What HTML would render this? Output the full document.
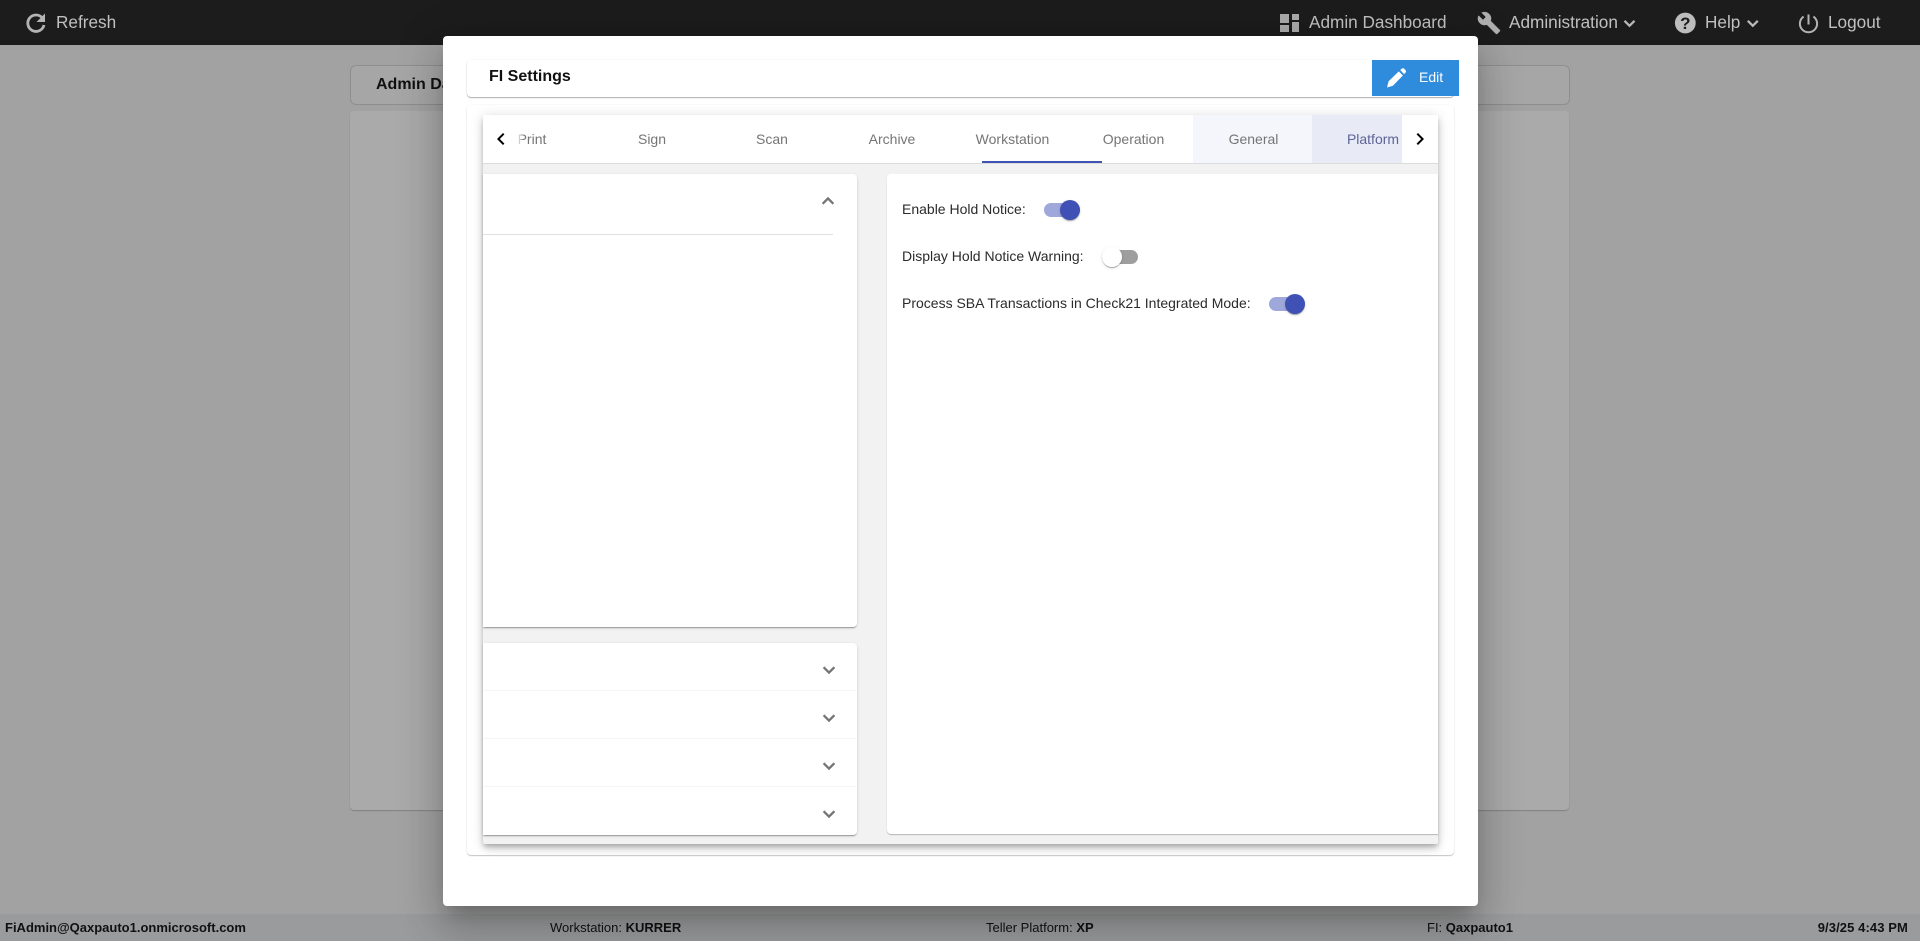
<!DOCTYPE html>
<html><head><meta charset="utf-8"><title>FI Settings</title>
<style>
html,body{margin:0;padding:0;width:1920px;height:941px;overflow:hidden;background:#a2a2a2;font-family:"Liberation Sans",Arial,sans-serif}
.a{position:absolute}
.t{position:absolute;white-space:nowrap;line-height:20px;height:20px}
svg{position:absolute;display:block}
.top{color:#c0c0c0;font-size:17.2px;top:12px}
.foot{font-size:13px;color:#111;top:918px}
.tab{font-size:14px;color:#757575;top:129px;width:120px;text-align:center}
.lab{font-size:14px;color:#2b2b2b}
.track{position:absolute;width:36px;height:14px;border-radius:7px}
.thumb{position:absolute;width:20px;height:20px;border-radius:50%;box-shadow:0 2px 1px -1px rgba(0,0,0,.2),0 1px 1px rgba(0,0,0,.14),0 1px 3px rgba(0,0,0,.12)}
</style></head>
<body>
<div class="a" style="left:0;top:0;width:1920px;height:45px;background:#1c1c1c"></div>
<svg style="left:0;top:0" width="1920" height="45" viewBox="0 0 1920 45">
  <path d="M42.5 18.2A8.2 8.2 0 1 0 44 25" fill="none" stroke="#b4b4b4" stroke-width="2.8"/>
  <path d="M45 13.5V22H36.5z" fill="#b4b4b4"/>
  <g fill="#aaa">
    <rect x="1280" y="14" width="9" height="9"/><rect x="1280" y="25" width="9" height="7"/>
    <rect x="1292" y="14" width="7" height="6"/><rect x="1292" y="22" width="7" height="10"/>
  </g>
  <g transform="translate(1477 11)" fill="#b0b0b0" stroke="#b0b0b0" stroke-width=".5"><path d="M22.7 19l-9.1-9.1c.9-2.3.4-5-1.5-6.9-2-2-5-2.4-7.4-1.3L9 6 6 9 1.6 4.7C.4 7.1.9 10.1 2.9 12.1c1.9 1.9 4.6 2.4 6.9 1.5l9.1 9.1c.4.4 1 .4 1.4 0l2.3-2.3c.5-.4.5-1.1.1-1.4z"/></g>
  <path d="M1624.5 20.8l5 5 5-5" fill="none" stroke="#b8b8b8" stroke-width="2.3"/>
  <circle cx="1685.3" cy="23" r="10.4" fill="#bdbdbd"/>
  <text x="1685.3" y="29" text-anchor="middle" font-family="Liberation Sans, sans-serif" font-size="17" font-weight="bold" fill="#1c1c1c">?</text>
  <path d="M1747.8 20.8l5 5 5-5" fill="none" stroke="#b8b8b8" stroke-width="2.3"/>
  <path d="M1803.6 16.6A8.6 8.6 0 1 0 1813.4 16.6" fill="none" stroke="#b4b4b4" stroke-width="2"/>
  <path d="M1808.5 14.5V24.5" fill="none" stroke="#b4b4b4" stroke-width="2"/>
</svg>
<div class="t top" style="left:56px">Refresh</div>
<div class="t top" style="left:1309px">Admin Dashboard</div>
<div class="t top" style="left:1509px">Administration</div>
<div class="t top" style="left:1705px">Help</div>
<div class="t top" style="left:1828px">Logout</div>

<div class="a" style="left:350px;top:65px;width:1218px;height:38px;border:1px solid #8e8e8e;border-radius:6px;background:#a6a6a6"></div>
<div class="t" style="left:376px;top:75px;font-size:16px;font-weight:bold;color:#111">Admin Dashboard</div>
<div class="a" style="left:350px;top:111px;width:1219px;height:699px;background:#aaa;border-radius:4px;box-shadow:0 1px 1px rgba(0,0,0,.2)"></div>

<div class="a" style="left:0;top:914px;width:1920px;height:27px;background:#9a9b9c"></div>
<div class="t foot" style="left:5px;font-weight:bold">FiAdmin@Qaxpauto1.onmicrosoft.com</div>
<div class="t foot" style="left:550px">Workstation: <b>KURRER</b></div>
<div class="t foot" style="left:986px">Teller Platform: <b>XP</b></div>
<div class="t foot" style="left:1427px">FI: <b>Qaxpauto1</b></div>
<div class="t foot" style="right:12px;font-weight:bold;letter-spacing:.1px">9/3/25 4:43 PM</div>

<div class="a" style="left:443px;top:36px;width:1035px;height:870px;background:#fff;border-radius:4px;box-shadow:0 11px 15px -7px rgba(0,0,0,.2),0 24px 38px 3px rgba(0,0,0,.14),0 9px 46px 8px rgba(0,0,0,.12)"></div>

<div class="a" style="left:467px;top:60px;width:987px;height:37px;background:#fff;border-radius:4px;box-shadow:0 1px 1px rgba(0,0,0,.3),0 0 2px rgba(0,0,0,.06)"></div>
<div class="t" style="left:489px;top:67px;font-size:16px;font-weight:bold;color:#111">FI Settings</div>
<div class="a" style="left:1372px;top:60px;width:87px;height:36px;background:#2f8cdc"></div>
<svg style="left:1380px;top:62px" width="32" height="32" viewBox="1380 62 32 32" fill="#fff">
  <path d="M1387 87.5l1.6-6.2 10.2-9.9 4.1 4.1-10 10.2z"/>
  <path d="M1400.2 70l1.5-1.3c.8-.7 1.8-.6 2.5.1l1.3 1.3c.7.8.7 1.8 0 2.5l-1.4 1.5z"/>
</svg>
<div class="t" style="left:1419px;top:67px;font-size:14px;color:#fff">Edit</div>

<div class="a" style="left:467px;top:105px;width:987px;height:750px;background:#fff;border-radius:4px;box-shadow:0 1px 1px rgba(0,0,0,.22),0 0 2px rgba(0,0,0,.06)"></div>

<div class="a" style="left:483px;top:115px;width:955px;height:729px;background:#f2f2f2;border-radius:0 0 2px 2px;box-shadow:0 3px 5px -1px rgba(0,0,0,.2),0 5px 8px rgba(0,0,0,.14),0 1px 14px rgba(0,0,0,.12)"></div>
<div class="a" style="left:483px;top:115px;width:955px;height:48px;background:#fff;border-bottom:1px solid #dcdcdc"></div>
<div class="a" style="left:1193px;top:115px;width:119px;height:48px;background:#f5f6fb"></div>
<div class="a" style="left:1312px;top:115px;width:90px;height:48px;background:#e8eaf6"></div>
<div class="t tab" style="left:472px">Print</div>
<div class="t tab" style="left:592px">Sign</div>
<div class="t tab" style="left:712px">Scan</div>
<div class="t tab" style="left:832px">Archive</div>
<div class="t tab" style="left:952.5px">Workstation</div>
<div class="t tab" style="left:1073.5px">Operation</div>
<div class="t tab" style="left:1193.5px">General</div>
<div class="t tab" style="left:1313px;color:#5c6596">Platform</div>
<div class="a" style="left:517px;top:120px;width:7px;height:40px;background:linear-gradient(to right,#fff,rgba(255,255,255,0))"></div>
<div class="a" style="left:982px;top:161px;width:120px;height:2px;background:#3f51b5"></div>
<svg style="left:489px;top:127px" width="24" height="24" viewBox="0 0 24 24" fill="#000"><path d="M15.41 7.41L14 6l-6 6 6 6 1.41-1.41L10.83 12z"/></svg>
<svg style="left:1408px;top:127px" width="24" height="24" viewBox="0 0 24 24" fill="#000"><path d="M10 6L8.59 7.41 13.17 12l-4.58 4.59L10 18l6-6z"/></svg>

<div class="a" style="left:483px;top:174px;width:374px;height:453px;background:#fff;border-radius:0 4px 4px 0;box-shadow:0 2px 1px -1px rgba(0,0,0,.2),0 1px 1px rgba(0,0,0,.14),0 1px 3px rgba(0,0,0,.12)"></div>
<div class="a" style="left:483px;top:234px;width:350px;height:1px;background:#e0e0e0"></div>
<svg style="left:816px;top:189px" width="24" height="24" viewBox="0 0 24 24" fill="#757575" stroke="#757575" stroke-width=".4"><path d="M12 8l-6 6 1.41 1.41L12 10.83l4.59 4.58L18 14z"/></svg>

<div class="a" style="left:483px;top:643px;width:374px;height:192px;background:#fff;border-radius:0 4px 4px 0;box-shadow:0 2px 1px -1px rgba(0,0,0,.2),0 1px 1px rgba(0,0,0,.14),0 1px 3px rgba(0,0,0,.12)"></div>
<div class="a" style="left:483px;top:690px;width:374px;height:1px;background:#f5f5f5"></div>
<div class="a" style="left:483px;top:738px;width:374px;height:1px;background:#f5f5f5"></div>
<div class="a" style="left:483px;top:786px;width:374px;height:1px;background:#f5f5f5"></div>
<svg style="left:817px;top:658px" width="24" height="24" viewBox="0 0 24 24" fill="#757575" stroke="#757575" stroke-width=".4"><path d="M16.59 8.59L12 13.17 7.41 8.59 6 10l6 6 6-6z"/></svg>
<svg style="left:817px;top:706px" width="24" height="24" viewBox="0 0 24 24" fill="#757575" stroke="#757575" stroke-width=".4"><path d="M16.59 8.59L12 13.17 7.41 8.59 6 10l6 6 6-6z"/></svg>
<svg style="left:817px;top:754px" width="24" height="24" viewBox="0 0 24 24" fill="#757575" stroke="#757575" stroke-width=".4"><path d="M16.59 8.59L12 13.17 7.41 8.59 6 10l6 6 6-6z"/></svg>
<svg style="left:817px;top:802px" width="24" height="24" viewBox="0 0 24 24" fill="#757575" stroke="#757575" stroke-width=".4"><path d="M16.59 8.59L12 13.17 7.41 8.59 6 10l6 6 6-6z"/></svg>

<div class="a" style="left:887px;top:174px;width:551px;height:660px;background:#fff;border-radius:4px 0 0 4px;box-shadow:0 1px 1px rgba(0,0,0,.25)"></div>
<div class="t lab" style="left:902px;top:199px">Enable Hold Notice:</div>
<div class="track" style="left:1044px;top:203px;background:#9fa8da"></div>
<div class="thumb" style="left:1060px;top:200px;background:#3f51b5"></div>
<div class="t lab" style="left:902px;top:246px">Display Hold Notice Warning:</div>
<div class="track" style="left:1102px;top:250px;background:#9e9e9e"></div>
<div class="thumb" style="left:1102px;top:247px;background:#fff"></div>
<div class="t lab" style="left:902px;top:293px">Process SBA Transactions in Check21 Integrated Mode:</div>
<div class="track" style="left:1269px;top:297px;background:#9fa8da"></div>
<div class="thumb" style="left:1285px;top:294px;background:#3f51b5"></div>
</body></html>
